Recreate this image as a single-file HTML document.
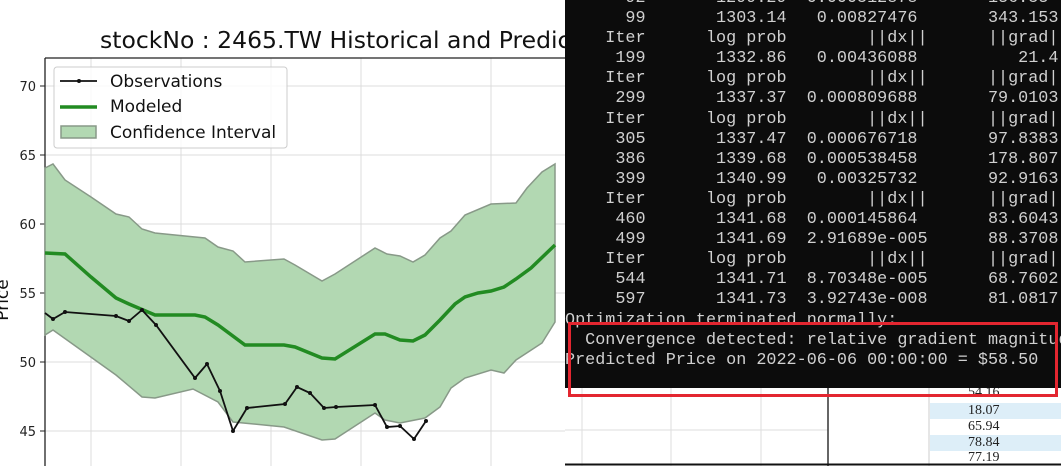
<!DOCTYPE html>
<html><head><meta charset="utf-8"><style>
html,body{margin:0;padding:0;width:1061px;height:466px;overflow:hidden;background:#fff;position:relative}
.term{position:absolute;left:565px;top:0;width:496px;height:388px;background:#0c0c0c;overflow:hidden}
.term pre{margin:0;position:absolute;left:0;top:-11px;font-family:"Liberation Mono",monospace;font-size:16.8px;line-height:20.1px;color:#d0d0d0;white-space:pre}
.red{position:absolute;left:568px;top:322px;width:484px;height:69px;border:3px solid #e32630}
.cell{position:absolute;font-family:"Liberation Serif",serif;font-size:14px;color:#222;left:968px}
</style></head><body>
<svg width="1061" height="466" style="position:absolute;left:0;top:0" font-family="DejaVu Sans, sans-serif">
<g stroke="#dcdcdc" stroke-width="1">
<line x1="45" y1="86" x2="565" y2="86"/><line x1="45" y1="155" x2="565" y2="155"/><line x1="45" y1="224" x2="565" y2="224"/><line x1="45" y1="293" x2="565" y2="293"/><line x1="45" y1="362" x2="565" y2="362"/><line x1="45" y1="431" x2="565" y2="431"/>
<line x1="91" y1="58" x2="91" y2="466"/><line x1="181" y1="58" x2="181" y2="466"/><line x1="271" y1="58" x2="271" y2="466"/><line x1="361" y1="58" x2="361" y2="466"/><line x1="491" y1="58" x2="491" y2="466"/>
</g>
<line x1="45" y1="58" x2="565" y2="58" stroke="#222" stroke-width="1.3"/>
<line x1="45" y1="58" x2="45" y2="466" stroke="#222" stroke-width="1.3"/>
<g stroke="#222"><line x1="40" y1="86" x2="45" y2="86"/><line x1="40" y1="155" x2="45" y2="155"/><line x1="40" y1="224" x2="45" y2="224"/><line x1="40" y1="293" x2="45" y2="293"/><line x1="40" y1="362" x2="45" y2="362"/><line x1="40" y1="431" x2="45" y2="431"/></g>
<g font-size="13" fill="#222" text-anchor="end"><text x="36" y="91">70</text><text x="36" y="160">65</text><text x="36" y="229">60</text><text x="36" y="298">55</text><text x="36" y="367">50</text><text x="36" y="436">45</text></g>
<text transform="translate(8,300) rotate(-90)" font-size="17" text-anchor="middle" fill="#111">Price</text>
<text x="100" y="48" font-size="23.5" fill="#111">stockNo : 2465.TW Historical and Predicted</text>
<polygon fill="#b2d8b2" stroke="#889988" stroke-width="1.5" points="45,168 53,164 65,180 91,197 116,214 129,217 142,229 155,233 195,237 205,238 218,247 233,251 245,262 284,259 295,265 322,281 335,274 375,248 387,254 400,256 413,262 425,255 440,238 451,231 465,215 491,204 516,203 527,188 542,172 555,164 555,322 542,343 516,360 504,373 491,370 465,378 451,388 440,407 425,418 400,423 385,420 375,413 335,439 322,440 284,427 233,422 218,402 193,389 155,398 142,397 116,375 53,330 45,335"/>
<polyline fill="none" stroke="#228b22" stroke-width="3.5" points="45,253 65,254 91,277 116,298 129,304 155,315 195,315 205,317 218,325 245,345 284,345 295,347 322,358 335,359 375,334 385,334 400,340 413,341 425,335 440,320 455,304 465,297 478,293 491,291 504,287 516,279 531,268 555,245"/>
<g fill="#111"><polyline fill="none" stroke="#111" stroke-width="1.8" points="45,313 53,319 65,312 116,316 129,321 142,310 156,325 195,378 207,364 220,391 233,431 247,408 285,404 297,387 310,393 324,408 336,407 375,405 387,427 400,426 414,439 426,421"/>
<circle cx="53" cy="319" r="2"/><circle cx="65" cy="312" r="2"/><circle cx="116" cy="316" r="2"/><circle cx="129" cy="321" r="2"/><circle cx="142" cy="310" r="2"/><circle cx="156" cy="325" r="2"/><circle cx="195" cy="378" r="2"/><circle cx="207" cy="364" r="2"/><circle cx="220" cy="391" r="2"/><circle cx="233" cy="431" r="2"/><circle cx="247" cy="408" r="2"/><circle cx="285" cy="404" r="2"/><circle cx="297" cy="387" r="2"/><circle cx="310" cy="393" r="2"/><circle cx="324" cy="408" r="2"/><circle cx="336" cy="407" r="2"/><circle cx="375" cy="405" r="2"/><circle cx="387" cy="427" r="2"/><circle cx="400" cy="426" r="2"/><circle cx="414" cy="439" r="2"/><circle cx="426" cy="421" r="2"/></g>
<rect x="54" y="67" width="233" height="81" rx="3" fill="#fff" fill-opacity="0.85" stroke="#ccc"/>
<line x1="60" y1="81" x2="97" y2="81" stroke="#111" stroke-width="1.8"/><circle cx="79" cy="81" r="2" fill="#111"/>
<line x1="60" y1="107" x2="97" y2="107" stroke="#228b22" stroke-width="3.5"/>
<rect x="61" y="126" width="35" height="12" fill="#b2d8b2" stroke="#889988" stroke-width="1.5"/>
<g font-size="17" fill="#111"><text x="110" y="87">Observations</text><text x="110" y="112">Modeled</text><text x="110" y="138">Confidence Interval</text></g>
<g stroke="#ddd"><line x1="565" y1="430" x2="828" y2="430"/><line x1="582" y1="388" x2="582" y2="466"/><line x1="671" y1="388" x2="671" y2="466"/><line x1="761" y1="388" x2="761" y2="466"/></g>
<line x1="828" y1="388" x2="828" y2="466" stroke="#333" stroke-width="1.5"/>
<rect x="930" y="388" width="131" height="78" fill="#fff"/>
<line x1="929" y1="388" x2="929" y2="466" stroke="#ccc"/>
<rect x="930" y="403" width="131" height="16" fill="#ddeef8"/>
<rect x="930" y="435" width="131" height="16" fill="#ddeef8"/>
<line x1="565" y1="464.5" x2="1061" y2="464.5" stroke="#111" stroke-width="2"/>
</svg>
<div class="cell" style="top:385px">54.16</div>
<div class="cell" style="top:403px">18.07</div>
<div class="cell" style="top:419px">65.94</div>
<div class="cell" style="top:435px">78.84</div>
<div class="cell" style="top:450px">77.19</div>
<div class="term"><pre>      92       1299.29  0.000512878       136.53
      99       1303.14   0.00827476       343.153
    Iter      log prob        ||dx||      ||grad||
     199       1332.86   0.00436088          21.4
    Iter      log prob        ||dx||      ||grad||
     299       1337.37  0.000809688       79.0103
    Iter      log prob        ||dx||      ||grad||
     305       1337.47  0.000676718       97.8383
     386       1339.68  0.000538458       178.807
     399       1340.99   0.00325732       92.9163
    Iter      log prob        ||dx||      ||grad||
     460       1341.68  0.000145864       83.6043
     499       1341.69  2.91689e-005      88.3708
    Iter      log prob        ||dx||      ||grad||
     544       1341.71  8.70348e-005      68.7602
     597       1341.73  3.92743e-008      81.0817
Optimization terminated normally:
  Convergence detected: relative gradient magnitude
Predicted Price on 2022-06-06 00:00:00 = $58.50</pre></div>
<div class="red"></div>
</body></html>
